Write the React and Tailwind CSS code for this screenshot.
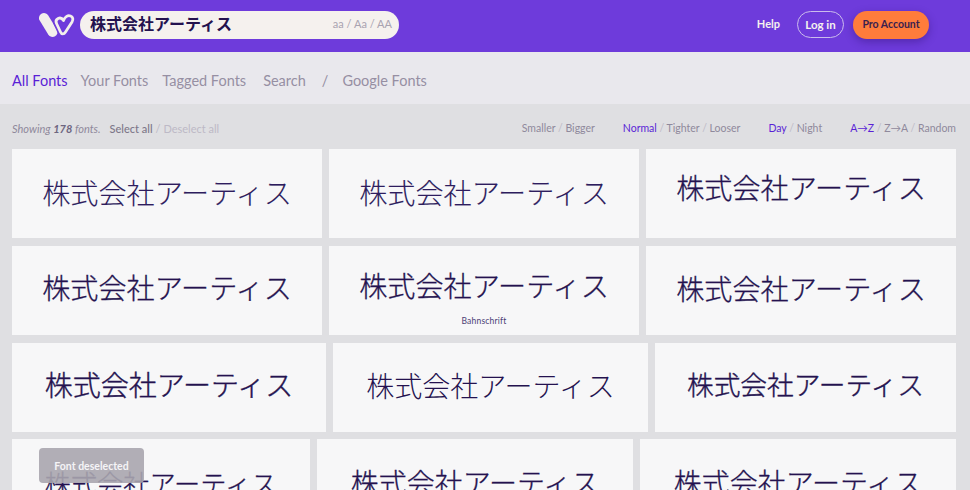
import React from "react";

const JP = "株式会社アーティス";

// the reference sits between Noto's light and regular, so light plus a hair of stroke
const hairline = "font-light";
const thin = "font-light [-webkit-text-stroke:0.1px] text-[#2e1d5e]";
const regular = "font-light [-webkit-text-stroke:0.3px]";
const heavy = "font-light [-webkit-text-stroke:0.4px]";

const rows = [
  {
    cols: "grid-cols-[310px_310px_310px]",
    cards: [
      { size: "text-[28.1px]", weight: thin, pad: "pb-[2px]" },
      { size: "text-[28.1px]", weight: thin, pad: "pb-[2px]" },
      { size: "text-[28.1px]", weight: regular, pad: "pb-[12px]" },
    ],
  },
  {
    cols: "grid-cols-[310px_310px_310px]",
    cards: [
      { size: "text-[28.1px]", weight: regular, pad: "pb-[6px]" },
      { size: "text-[28.1px]", weight: regular, pad: "pb-[10px]", label: "Bahnschrift" },
      { size: "text-[28.1px]", weight: regular, pad: "pb-[4px]" },
    ],
  },
  {
    cols: "grid-cols-[314px_315px_301px]",
    cards: [
      { size: "text-[28px]", weight: heavy, pad: "pb-[8px]" },
      { size: "text-[28px]", weight: hairline, pad: "pb-[6px]" },
      { size: "text-[26.7px]", weight: heavy, pad: "pb-[6px]" },
    ],
  },
  {
    cols: "grid-cols-[298px_316px_316px] -mt-px",
    cards: [
      { size: "text-[26.2px]", weight: regular, pad: "pb-0" },
      { size: "text-[28px]", weight: regular, pad: "pb-[4px]" },
      { size: "text-[28px]", weight: regular, pad: "pb-[4px]" },
    ],
  },
];

const FontCard = ({ card }) => (
  <div className={`relative h-[89px] bg-[#f7f7f8] flex items-center justify-center text-[#24124f] ${card.pad}`}>
    <span className={`whitespace-nowrap [font-family:'Noto_Sans_CJK_JP',sans-serif] ${card.size} ${card.weight}`}>{JP}</span>
    {card.label && (
      <span className="absolute bottom-[7px] left-0 right-0 text-center text-[8.5px] tracking-wide text-[#4a3d75]">{card.label}</span>
    )}
  </div>
);

const Logo = () => (
  <svg width="38" height="26" viewBox="0 0 38 26" fill="none">
    <path d="M5 6 L13.5 20" stroke="#f3efec" strokeWidth="10" strokeLinecap="round" />
    <path
      d="M24.5 8.5 C26 4.5 29 3 31.5 4 C34 5 34.5 7.5 33 10 L26.5 20 C25 22.5 22.5 22.5 21.5 20 L17.5 11.5 C15.5 7 21.5 3.5 24.5 8.5 Z"
      fill="#6e3bdb"
      stroke="#6e3bdb"
      strokeWidth="6"
      strokeLinejoin="round"
    />
    <path
      d="M24.5 8.5 C26 4.5 29 3 31.5 4 C34 5 34.5 7.5 33 10 L26.5 20 C25 22.5 22.5 22.5 21.5 20 L17.5 11.5 C15.5 7 21.5 3.5 24.5 8.5 Z"
      stroke="#f3efec"
      strokeWidth="2.8"
      strokeLinejoin="round"
    />
  </svg>
);

const App = () => {
  return (
    <div className="relative w-[970px] h-[490px] overflow-hidden bg-[#dfdfe2] [font-family:Lato,sans-serif]">
      {/* Header */}
      <header className="h-[52px] bg-[#6e3bdb] flex items-center pb-[3px] pl-[39px] pr-[41px]">
        <Logo />
        <div className="ml-[3px] w-[319px] h-[28px] rounded-full bg-[#f5f1ee] flex items-center justify-between pl-[10px] pr-[7px]">
          <span className="pb-[3px] [font-family:'Noto_Sans_CJK_JP',sans-serif] font-bold text-[16px] text-[#24124f]">{JP}</span>
          <span className="text-[11px] text-[#a9a3b0]">aa / Aa / AA</span>
        </div>
        <div className="ml-auto flex items-center">
          <a className="text-[11px] font-bold text-[#f5f1ee]">Help</a>
          <a className="ml-[17px] h-[27px] w-[47px] rounded-full border border-[#cbbcec] flex items-center justify-center text-[11.5px] font-bold text-[#f5f1ee]">Log in</a>
          <a className="ml-[9px] h-[28px] w-[76px] rounded-full bg-[#ff7c3b] shadow-[0_3px_8px_rgba(50,20,120,0.45)] flex items-center justify-center text-[10.5px] font-bold text-[#3a1f4f]">Pro Account</a>
        </div>
      </header>

      {/* Tabs */}
      <nav className="h-[52px] bg-[#e9e8ed] flex items-center pt-[6px] pl-[12px] text-[14.5px] text-[#968fa3]">
        <a className="text-[#5a1fd6]">All Fonts</a>
        <a className="ml-[13px]">Your Fonts</a>
        <a className="ml-[14px]">Tagged Fonts</a>
        <a className="ml-[17px]">Search</a>
        <span className="ml-[16px]">/</span>
        <a className="ml-[14px]">Google Fonts</a>
      </nav>

      {/* Toolbar */}
      <div className="h-[45px] pt-[5px] pr-[14px] pl-[12px] flex items-center text-[10.5px] text-[#8f899c]">
        <span className="italic text-[11px]">Showing <span className="font-bold text-[#6d6580]">178</span> fonts.</span>
        <span className="ml-[9px] text-[11px] font-medium text-[#7d7789]">Select all</span>
        <span className="ml-[3px] text-[11px] text-[#bdb9c6]">/ Deselect all</span>
        <div className="ml-auto flex items-center">
          <span>Smaller <span className="text-[#bdb9c6]">/</span> Bigger</span>
          <span className="ml-[28px]"><span className="text-[#5a1fd6]">Normal</span> <span className="text-[#bdb9c6]">/</span> Tighter <span className="text-[#bdb9c6]">/</span> Looser</span>
          <span className="ml-[28px]"><span className="text-[#5a1fd6]">Day</span> <span className="text-[#bdb9c6]">/</span> Night</span>
          <span className="ml-[28px]"><span className="text-[#5a1fd6]">A→Z</span> <span className="text-[#bdb9c6]">/</span> Z→A <span className="text-[#bdb9c6]">/</span> Random</span>
        </div>
      </div>

      {/* Cards */}
      <main className="pl-[12px] flex flex-col gap-[8px]">
        {rows.map((row, i) => (
          <div key={i} className={`grid gap-[7px] ${row.cols}`}>
            {row.cards.map((card, j) => (
              <FontCard key={j} card={card} />
            ))}
          </div>
        ))}
      </main>

      {/* Toast */}
      <div className="absolute left-[39px] top-[448px] w-[105px] h-[35px] rounded-[4px] bg-[#a9a5ae]/90 pt-[11px] text-center text-[10.5px] font-bold text-[#f5f4f6]">
        Font deselected
      </div>
    </div>
  );
};

export default App;
